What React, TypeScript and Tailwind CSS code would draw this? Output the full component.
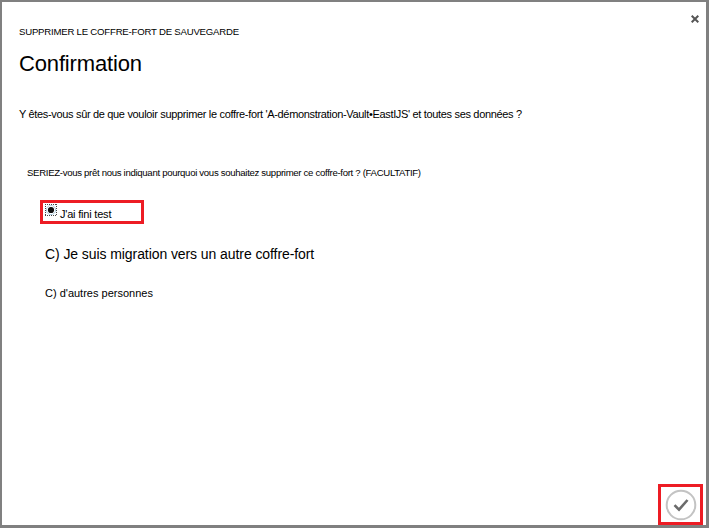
export default function App() {
  return (
    <main className="flex h-[528px] w-[709px] flex-col overflow-hidden border-2 border-r-[3px] border-b-[3px] border-[#808080] bg-white font-['Liberation_Sans',Arial,sans-serif] whitespace-nowrap text-black">
      <header className="flex h-[73px] justify-between pl-[17px]">
        <div className="pt-[24px]">
          <p className="text-[9.6px] leading-3 tracking-[-0.21px]">SUPPRIMER LE COFFRE-FORT DE SAUVEGARDE</p>
          <h1 className="mt-[14px] text-[22px] leading-6 tracking-[-0.15px]">Confirmation</h1>
        </div>
        <button aria-label="Fermer" className="mt-[13px] mr-[7px] h-2 w-2">
          <svg viewBox="0 0 8 8" className="block h-2 w-2" fill="none" stroke="#555" strokeWidth="2">
            <path d="M.7.7 7.3 7.3M7.3.7.7 7.3" />
          </svg>
        </button>
      </header>
      <p className="mt-[33px] pl-[17px] text-[11px] leading-3 tracking-[-0.33px]">
        Y êtes-vous sûr de que vouloir supprimer le coffre-fort 'A-démonstration-Vault•EastIJS' et toutes ses données ?
      </p>
      <section className="mt-[47px] flex flex-col items-start pl-[25px]">
        <p className="text-[9.6px] leading-3 tracking-[-0.31px]">
          SERIEZ-vous prêt nous indiquant pourquoi vous souhaitez supprimer ce coffre-fort ? (FACULTATIF)
        </p>
        <label className="mt-[21px] ml-[13px] flex h-6 w-[104px] border-3 border-[#ed1c24] pl-[2px]">
          <svg viewBox="0 0 12 12" className="mt-[1px] h-3 w-3" fill="none">
            <path d="M0 .5h12M0 11.5h12M.5 0v12M11.5 0v12" stroke="#444" strokeDasharray="1 1" shapeRendering="crispEdges" />
            <circle cx="6" cy="6" r="4.6" stroke="#9bc4dc" strokeWidth=".8" />
            <circle cx="6" cy="6" r="3.1" fill="#111" />
          </svg>
          <span className="mt-[5px] ml-[3px] text-[11px] leading-3 tracking-[-0.2px]">J'ai fini test</span>
        </label>
        <p className="mt-[22px] ml-[18px] text-[14px] leading-4 tracking-[-0.08px]">C) Je suis migration vers un autre coffre-fort</p>
        <p className="mt-[25px] ml-[18px] text-[11px] leading-3">C) d'autres personnes</p>
      </section>
      <footer className="mt-auto mr-[3px] flex justify-end">
        <button aria-label="Valider" className="flex h-[41px] w-[45px] items-center justify-center border-3 border-[#ed1c24]">
          <svg viewBox="0 0 32 32" className="h-8 w-8 shrink-0" fill="none">
            <circle cx="16" cy="16" r="14.3" stroke="#c3c3c3" strokeWidth="2" />
            <path d="m9.5 16.2 4.5 4.5L22.5 11" stroke="#6b6b6b" strokeWidth="2.6" />
          </svg>
        </button>
      </footer>
    </main>
  );
}
